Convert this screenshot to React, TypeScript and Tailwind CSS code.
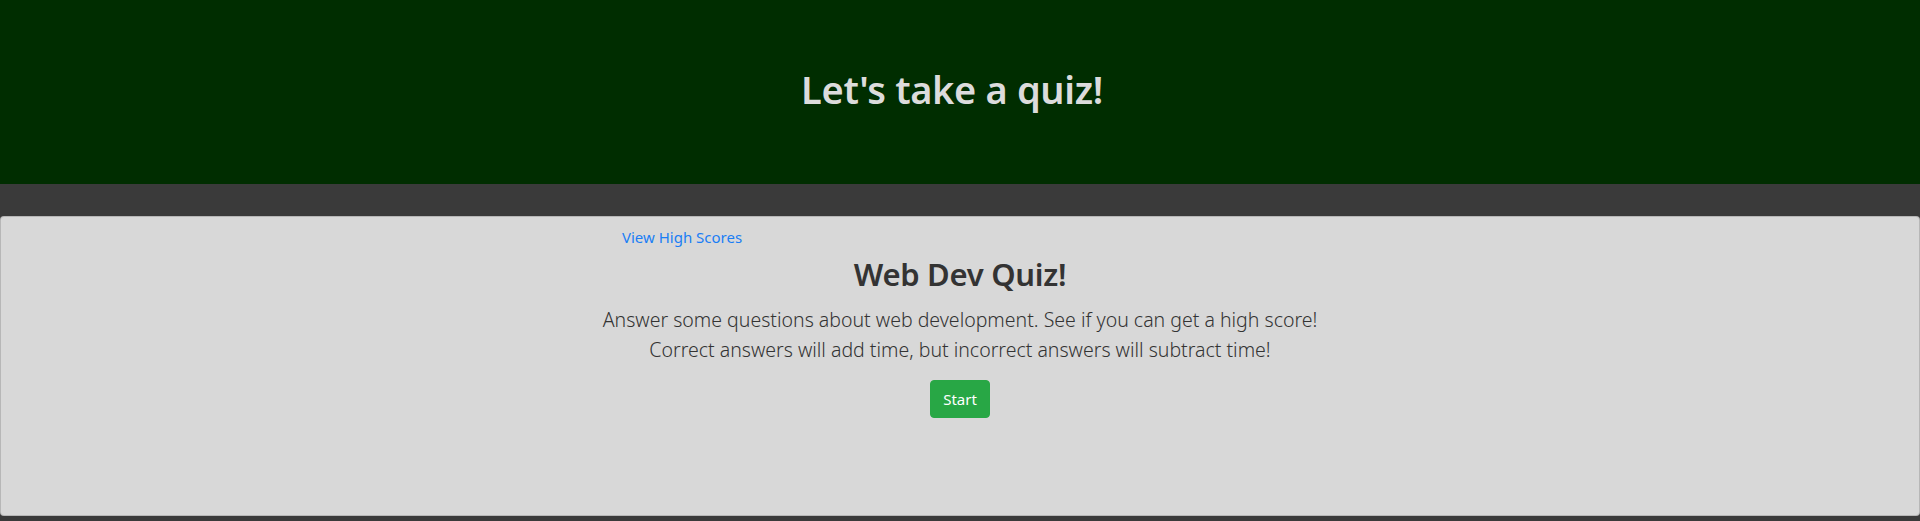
import React from "react";

export default function App() {
  const font = { fontFamily: '"Noto Sans", "Open Sans", sans-serif' };
  return (
    <div className="min-h-[521px] bg-[#3a3a3a]" style={font}>
      <header className="h-[184px] bg-[#002d00] flex items-center justify-center pb-[4px] pr-[16px]">
        <h1 className="text-[38px] font-semibold tracking-[-0.35px] leading-[1.2] text-[#dcdcdc]">Let's take a quiz!</h1>
      </header>
      <div className="pt-[32px]">
        <div className="h-[300px] rounded border border-black/15 bg-[#d8d8d8]">
          <div className="w-[1140px] mx-auto px-[15px]">
            <div className="pl-[217px] pt-[8px]">
              <a className="text-[15px] leading-[24px] text-[#1a7ef5]">View High Scores</a>
            </div>
            <div className="flex flex-col items-center text-[#333]">
              <h2 className="text-[31px] font-semibold tracking-[-0.3px] leading-[1.2] mt-[7px]">Web Dev Quiz!</h2>
              <p className="text-[19.5px] font-light leading-[30px] text-center mt-[12px]">
                Answer some questions about web development. See if you can get a high score!
                <br />
                Correct answers will add time, but incorrect answers will subtract time!
              </p>
              <button className="mt-[15px] h-[38px] px-[12px] rounded bg-[#28a745] border border-[#28a745] text-white text-[15px] leading-[24px]">
                Start
              </button>
            </div>
          </div>
        </div>
      </div>
    </div>
  );
}
